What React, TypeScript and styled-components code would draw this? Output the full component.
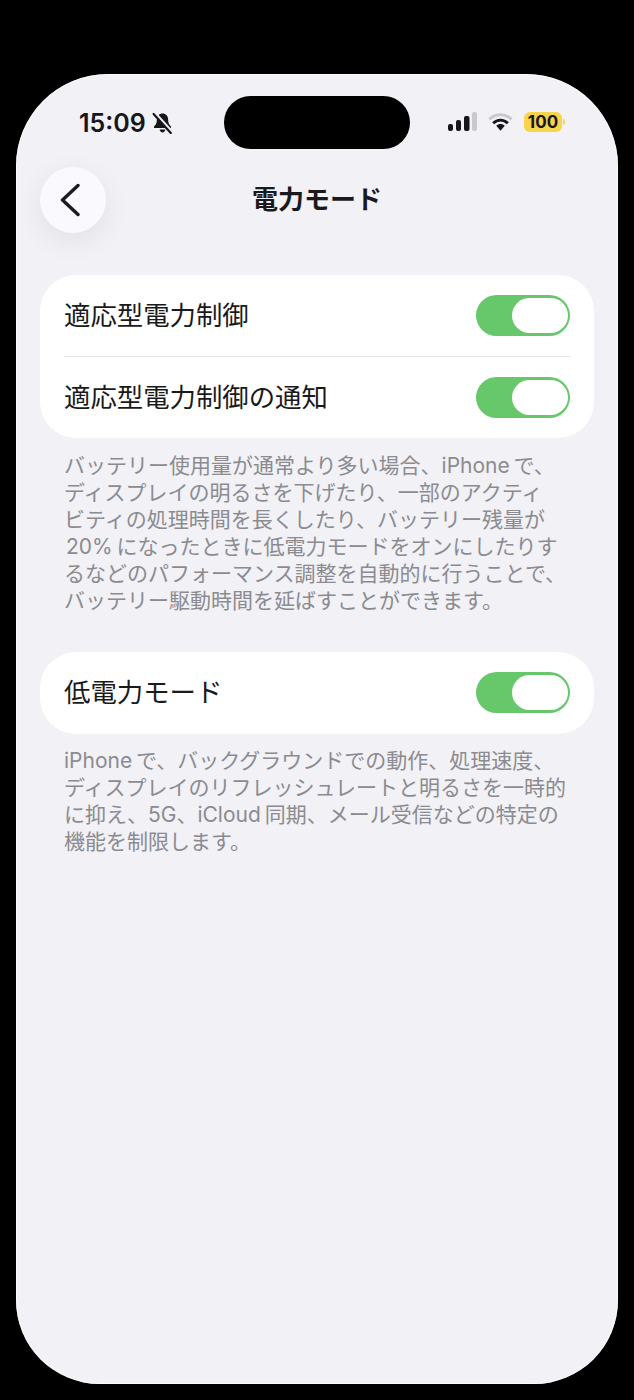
import React from 'react'
import styled, { createGlobalStyle } from 'styled-components'

const GlobalStyle = createGlobalStyle`
    html, body {
        margin: 0;
        padding: 0;
        background: #000;
    }
    body {
        font-family: Inter, "Noto Sans CJK JP", sans-serif;
    }
`

const Page = styled.div`
    box-sizing: border-box;
    width: 634px;
    height: 1400px;
    padding: 74px 16px 16px;
    background: #000;
`

const Phone = styled.div`
    box-sizing: border-box;
    height: 1310px;
    padding: 22px 24px 0;
    border-radius: 92px 92px 84px 84px;
    background: #f1f1f6;
    box-shadow: inset 0 0 0 1px rgba(255, 255, 255, 0.7);
    overflow: hidden;
`

const StatusBar = styled.div`
    display: grid;
    grid-template-columns: 1fr 186px 1fr;
    align-items: center;
    height: 53px;
    margin: 0 -24px;
`

const StatusLeft = styled.div`
    display: flex;
    align-items: center;
    gap: 6px;
    padding-left: 63px;
`

const Time = styled.span`
    font-family: Inter, sans-serif;
    font-size: 25px;
    font-weight: 600;
    letter-spacing: 0;
    color: #17171a;
`

const Island = styled.div`
    height: 53px;
    border-radius: 27px;
    background: #000;
`

const StatusRight = styled.div`
    display: flex;
    align-items: center;
    gap: 11px;
    padding: 0 0 2px 38px;
`

const Battery = styled.div`
    display: flex;
    align-items: center;
    gap: 1px;
`

const BatteryBody = styled.div`
    display: flex;
    align-items: center;
    justify-content: center;
    width: 38px;
    height: 20px;
    border-radius: 6px;
    background: #f8d34c;
    font-family: Inter, sans-serif;
    font-size: 17px;
    font-weight: 700;
    color: #17171a;
`

const BatteryTip = styled.div`
    width: 2px;
    height: 6px;
    border-radius: 0 2px 2px 0;
    background: #f8d34c;
`

const NavBar = styled.div`
    display: grid;
    grid-template-columns: 66px 1fr 66px;
    align-items: center;
    margin-top: 18px;
    height: 66px;
`

const BackButton = styled.div`
    display: flex;
    align-items: center;
    justify-content: center;
    width: 66px;
    height: 66px;
    padding-right: 7px;
    box-sizing: border-box;
    border-radius: 50%;
    background: #faf9fe;
    box-shadow: 0 8px 28px rgba(0, 0, 0, 0.07);
`

const Title = styled.div`
    margin-top: -5px;
    text-align: center;
    font-size: 26px;
    font-weight: 700;
    color: #1a1a1c;
`

const Card = styled.div<{ $first?: boolean }>`
    margin-top: ${({ $first }) => ($first ? '42px' : '38px')};
    padding: 0 24px;
    border-radius: 36px;
    background: #fff;
`

const Row = styled.div<{ $divided?: boolean }>`
    display: flex;
    align-items: center;
    justify-content: space-between;
    box-sizing: border-box;
    height: 81.5px;
    border-bottom: ${({ $divided }) => ($divided ? '1px solid #e4e4e6' : 'none')};
`

const RowLabel = styled.span`
    margin-top: -4px;
    font-size: 26.4px;
    color: #1a1a1c;
`

const Toggle = styled.div`
    display: flex;
    justify-content: flex-end;
    box-sizing: border-box;
    width: 94px;
    height: 41px;
    padding: 3px 2px;
    border-radius: 21px;
    background: #67c76b;
`

const Knob = styled.div`
    width: 56px;
    height: 35px;
    border-radius: 18px;
    background: #fff;
`

const Note = styled.div<{ $tall?: boolean }>`
    margin-top: ${({ $tall }) => ($tall ? '13px' : '14px')};
    padding-left: 24px;
    font-size: 21px;
    line-height: 27px;
    color: #8b8b90;
    white-space: nowrap;
`

const BellOff = () => (
    <svg width="21" height="22" viewBox="0 0 21 22" fill="none">
        <path
            d="M10.5 1.5c-3.4 0-5.6 2.5-5.6 5.7 0 3.5-.9 5.2-2.7 7-.7.7-.2 1.9.8 1.9h15c1 0 1.5-1.2.8-1.9-1.8-1.8-2.7-3.5-2.7-7 0-3.2-2.2-5.7-5.6-5.7z"
            fill="#17171a"
        />
        <path d="M7.6 17.5c.3 1.7 1.4 2.9 2.9 2.9s2.6-1.2 2.9-2.9z" fill="#17171a" />
        <path d="M3 .8 20 19.6" stroke="#f1f1f6" strokeWidth="2.4" />
        <path d="M1.6 2 18.8 21" stroke="#17171a" strokeWidth="2.2" strokeLinecap="round" />
    </svg>
)

const Signal = () => (
    <svg width="29" height="20" viewBox="0 0 29 20">
        <rect x="0" y="12" width="5" height="7" rx="2" fill="#17171a" />
        <rect x="8" y="8" width="5" height="11" rx="2" fill="#17171a" />
        <rect x="16" y="4" width="5.5" height="15" rx="2" fill="#17171a" />
        <rect x="24" y="0" width="5" height="19" rx="2" fill="#c9c9cd" />
    </svg>
)

const Wifi = () => (
    <svg width="25" height="20" viewBox="0 0 26 20" fill="none">
        <path d="M1.4 7.2C4.5 4.2 8.5 2.4 13 2.4s8.5 1.8 11.6 4.8" stroke="#c9c9cd" strokeWidth="3" />
        <path d="M5.4 11.2C7.4 9.2 10 8 13 8s5.6 1.2 7.6 3.2" stroke="#17171a" strokeWidth="3" />
        <path d="M8.6 13.8c1.2-1 2.7-1.6 4.4-1.6s3.2.6 4.4 1.6L13 19z" fill="#17171a" />
    </svg>
)

const Chevron = () => (
    <svg width="20" height="34" viewBox="0 0 20 34" fill="none">
        <path d="M18 2.5 2.5 17 18 31.5" stroke="#1c1c1f" strokeWidth="3.4" strokeLinecap="round" strokeLinejoin="round" />
    </svg>
)

const Switch = () => (
    <Toggle>
        <Knob />
    </Toggle>
)

const adaptiveNote = [
    'バッテリー使用量が通常より多い場合、iPhone\u2009で、',
    'ディスプレイの明るさを下げたり、一部のアクティ',
    'ビティの処理時間を長くしたり、バッテリー残量が',
    '\u200A20%\u2009になったときに低電力モードをオンにしたりす',
    'るなどのパフォーマンス調整を自動的に行うことで、',
    'バッテリー駆動時間を延ばすことができます。'
]

const lowPowerNote = [
    'iPhone\u2009で、バックグラウンドでの動作、処理速度、',
    'ディスプレイのリフレッシュレートと明るさを一時的',
    'に抑え、5G、iCloud\u2009同期、メール受信などの特定の',
    '機能を制限します。'
]

export default function App() {
    return (
        <Page>
            <GlobalStyle />
            <Phone>
                <StatusBar>
                    <StatusLeft>
                        <Time>15:09</Time>
                        <BellOff />
                    </StatusLeft>
                    <Island />
                    <StatusRight>
                        <Signal />
                        <Wifi />
                        <Battery>
                            <BatteryBody>100</BatteryBody>
                            <BatteryTip />
                        </Battery>
                    </StatusRight>
                </StatusBar>
                <NavBar>
                    <BackButton>
                        <Chevron />
                    </BackButton>
                    <Title>電力モード</Title>
                </NavBar>
                <Card $first>
                    <Row $divided>
                        <RowLabel>適応型電力制御</RowLabel>
                        <Switch />
                    </Row>
                    <Row>
                        <RowLabel>適応型電力制御の通知</RowLabel>
                        <Switch />
                    </Row>
                </Card>
                <Note>
                    {adaptiveNote.map((line) => (
                        <div key={line}>{line}</div>
                    ))}
                </Note>
                <Card>
                    <Row>
                        <RowLabel>低電力モード</RowLabel>
                        <Switch />
                    </Row>
                </Card>
                <Note $tall>
                    {lowPowerNote.map((line) => (
                        <div key={line}>{line}</div>
                    ))}
                </Note>
            </Phone>
        </Page>
    )
}
